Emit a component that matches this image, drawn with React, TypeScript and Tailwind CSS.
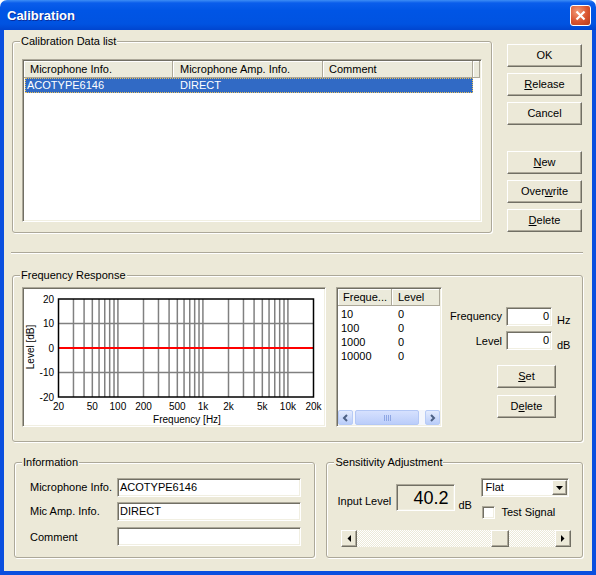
import React from 'react';

// classic 3D edges used all over the dialog
const sunken =
  'border border-t-[#ACA899] border-l-[#ACA899] border-r-white border-b-white p-px shadow-[inset_1px_1px_0_#716F64,inset_-1px_-1px_0_#F1EFE2]';
const raised =
  'border border-t-white border-l-white border-r-[#716F64] border-b-[#716F64] bg-[#ECE9D8] shadow-[inset_-1px_-1px_0_#ACA899]';
const headCell =
  'flex h-full items-center border-r border-b border-[#ACA899] bg-[#EBEADB] shadow-[inset_1px_1px_0_#fff]';

function Btn({ children, className = '' }: { children: React.ReactNode; className?: string }) {
  return (
    <button
      type="button"
      className={`${raised} flex h-[23px] items-center justify-center text-[11px] leading-none text-black ${className}`}
    >
      {children}
    </button>
  );
}

function Group({
  label,
  className = '',
  children,
}: {
  label: string;
  className?: string;
  children?: React.ReactNode;
}) {
  return (
    <div
      className={`relative rounded-[3px] border border-[#ACA899] shadow-[inset_1px_1px_0_#fff,1px_1px_0_#fff] ${className}`}
    >
      <span className="absolute left-[7px] top-[-7px] bg-[#ECE9D8] px-px text-[11px] leading-[13px]">
        {label}
      </span>
      {children}
    </div>
  );
}

function ListView() {
  return (
    <div className={`${sunken} h-[163px] w-[460px] bg-white`}>
      <div className="flex h-[17px] text-[11px]">
        <div className={`${headCell} w-[149px] pl-[6px]`}>Microphone Info.</div>
        <div className={`${headCell} w-[150px] pl-[7px]`}>Microphone Amp. Info.</div>
        <div className={`${headCell} w-[150px] pl-[6px]`}>Comment</div>
        <div className={`${headCell} flex-1`} />
      </div>
      <div className="ml-px flex h-[15px] w-[448px] items-center border border-dotted border-[#E9C25A] bg-[#316AC5] text-[11px] text-white">
        <span className="w-[147px] pl-px">ACOTYPE6146</span>
        <span className="pl-[7px]">DIRECT</span>
      </div>
    </div>
  );
}

function Graph() {
  const L = 34.5;
  const R = 289.5;
  const T = 10;
  const B = 108;
  const fx = (f: number) => L + ((R - L) / 3) * Math.log10(f / 20);
  const fy = (db: number) => T + ((20 - db) * (B - T)) / 40;

  const freqs: number[] = [];
  for (const dec of [10, 100, 1000, 10000]) {
    for (let m = 1; m <= 9; m++) {
      const f = m * dec;
      if (f > 20 && f < 20000) freqs.push(f);
    }
  }
  const xLabels: [number, string][] = [
    [20, '20'],
    [50, '50'],
    [100, '100'],
    [200, '200'],
    [500, '500'],
    [1000, '1k'],
    [2000, '2k'],
    [5000, '5k'],
    [10000, '10k'],
    [20000, '20k'],
  ];

  return (
    <div className={`${sunken} h-[140px] w-[304px] bg-white`}>
      <svg width="300" height="136" viewBox="0 0 300 136" className="block">
        {freqs.map((f) => (
          <line key={f} x1={fx(f)} x2={fx(f)} y1={T} y2={B} stroke="#808080" strokeWidth="1.5" />
        ))}
        {[10, -10].map((d) => (
          <line key={d} x1={L} x2={R} y1={fy(d)} y2={fy(d)} stroke="#808080" strokeWidth="1.5" />
        ))}
        <line x1={L} x2={R} y1={fy(0)} y2={fy(0)} stroke="#FF0000" strokeWidth="2" />
        <rect x={L} y={T} width={R - L} height={B - T} fill="none" stroke="#000" strokeWidth="1.5" />
        <g fontFamily="'Liberation Sans', Arial, sans-serif" fontSize="10" fill="#000">
          {[20, 10, 0, -10, -20].map((d) => (
            <text key={d} x={30} y={fy(d) + 3.5} textAnchor="end">
              {d}
            </text>
          ))}
          {xLabels.map(([f, s]) => (
            <text key={s} x={fx(f)} y={120.5} textAnchor="middle">
              {s}
            </text>
          ))}
          <text x={163} y={134} textAnchor="middle">
            Frequency [Hz]
          </text>
          <text x={10} y={58} textAnchor="middle" transform="rotate(-90 10 58)">
            Level [dB]
          </text>
        </g>
      </svg>
    </div>
  );
}

function XpArrow({ dir }: { dir: 'l' | 'r' }) {
  return (
    <div className="flex h-full w-[15px] items-center justify-center rounded-[2px] border border-[#B7CBF6] bg-[linear-gradient(to_bottom,#E3EBFE,#BACDF9)]">
      <svg width="7" height="8" viewBox="0 0 7 8">
        <path
          d={dir === 'l' ? 'M5 1L2 4L5 7' : 'M2 1L5 4L2 7'}
          stroke="#4D6185"
          strokeWidth="2"
          fill="none"
        />
      </svg>
    </div>
  );
}

function FreqList() {
  const rows = [
    ['10', '0'],
    ['100', '0'],
    ['1000', '0'],
    ['10000', '0'],
  ];
  return (
    <div className={`${sunken} flex h-[140px] w-[106px] flex-col bg-white text-[11px]`}>
      <div className="flex h-[17px]">
        <div className={`${headCell} w-[54px] pl-[5px]`}>Freque...</div>
        <div className={`${headCell} flex-1 pl-[6px]`}>Level</div>
      </div>
      <div className="flex-1 pt-px">
        {rows.map(([f, l]) => (
          <div key={f} className="flex leading-[14px]">
            <span className="w-[54px] pl-[3px]">{f}</span>
            <span className="pl-[6px]">{l}</span>
          </div>
        ))}
      </div>
      <div className="flex h-[15px] bg-[#F4F6FC]">
        <XpArrow dir="l" />
        <div className="ml-[2px] flex w-[64px] items-center justify-center gap-px rounded-[2px] border border-[#B3C7F5] bg-[linear-gradient(to_bottom,#D6E1FE,#BBCDFA)]">
          <span className="h-[6px] w-px bg-[#8EA6E4]" />
          <span className="h-[6px] w-px bg-[#8EA6E4]" />
          <span className="h-[6px] w-px bg-[#8EA6E4]" />
          <span className="h-[6px] w-px bg-[#8EA6E4]" />
        </div>
        <div className="flex-1" />
        <XpArrow dir="r" />
      </div>
    </div>
  );
}

function Field({ value, className = '' }: { value: string; className?: string }) {
  return (
    <div className={`${sunken} flex h-[19px] items-center bg-white text-[11px] ${className}`}>{value}</div>
  );
}

function ClassicArrow({ dir }: { dir: 'l' | 'r' }) {
  return (
    <div className={`${raised} flex h-full w-[16px] items-center justify-center`}>
      <svg width="4" height="7" viewBox="0 0 4 7">
        <path d={dir === 'l' ? 'M4 0L0.5 3.5L4 7Z' : 'M0 0L3.5 3.5L0 7Z'} fill="#000" />
      </svg>
    </div>
  );
}

export default function App() {
  return (
    <div className="h-[575px] w-[596px] bg-white font-['Liberation_Sans',Arial,sans-serif] text-black">
      <div className="flex h-full flex-col">
        {/* title bar */}
        <div className="flex h-[30px] items-center justify-between rounded-t-[7px] bg-[linear-gradient(to_bottom,#3D8DF5_0%,#0A5DEB_10%,#0055E5_35%,#0053E1_80%,#0045CF_100%)] pl-[7px] pr-[5px]">
          <span className="pt-px text-[13px] font-bold text-white [text-shadow:1px_1px_0_#0B2E9E]">
            Calibration
          </span>
          <div className="flex h-[21px] w-[21px] items-center justify-center rounded-[3px] border border-white bg-[radial-gradient(circle_at_35%_30%,#F39B78,#D9542F_55%,#B63C1C)]">
            <svg width="11" height="11" viewBox="0 0 11 11">
              <path d="M1.5 1.5L9.5 9.5M9.5 1.5L1.5 9.5" stroke="#fff" strokeWidth="2.2" />
            </svg>
          </div>
        </div>

        {/* client area */}
        <div className="flex-1 border-x-4 border-b-4 border-[#0A4FDF] bg-[#ECE9D8] pl-[8px] pr-[9px] pt-[11px] text-[11px]">
          <div className="flex">
            <Group label="Calibration Data list" className="h-[192px] w-[480px] pl-[9px] pt-[17px]">
              <ListView />
            </Group>
            <div className="ml-[15px] flex w-[75px] flex-col pt-[3px]">
              <Btn>OK</Btn>
              <Btn className="mt-[6px]">
                <u>R</u>elease
              </Btn>
              <Btn className="mt-[6px]">Cancel</Btn>
              <Btn className="mt-[26px]">
                <u>N</u>ew
              </Btn>
              <Btn className="mt-[6px]">
                Over<u>w</u>rite
              </Btn>
              <Btn className="mt-[6px]">
                <u>D</u>elete
              </Btn>
            </div>
          </div>

          <div className="-ml-px mt-[19px] h-[2px] w-[572px] border-t border-b border-t-[#ACA899] border-b-white" />

          <Group label="Frequency Response" className="mt-[21px] flex h-[167px] w-[571px] pl-[9px] pt-[11px]">
            <Graph />
            <div className="ml-[10px]">
              <FreqList />
            </div>
            <div className="ml-[8px] flex flex-col">
              <div className="mt-[20px] flex h-[19px] items-start">
                <span className="mt-[3px] w-[52px] text-right leading-[13px]">Frequency</span>
                <Field value="0" className="ml-[4px] w-[46px] justify-end pr-[2px]" />
                <span className="ml-[5px] mt-[7px] leading-[13px]">Hz</span>
              </div>
              <div className="mt-[5px] flex h-[19px] items-start">
                <span className="mt-[4px] w-[52px] text-right leading-[13px]">Level</span>
                <Field value="0" className="ml-[4px] w-[46px] justify-end pr-[2px]" />
                <span className="ml-[5px] mt-[8px] leading-[13px]">dB</span>
              </div>
              <Btn className="ml-[47px] mt-[15px] w-[59px]">
                <u>S</u>et
              </Btn>
              <Btn className="ml-[47px] mt-[7px] w-[59px]">
                D<u>e</u>lete
              </Btn>
            </div>
          </Group>

          <div className="mt-[20px] flex">
            <Group label="Information" className="ml-[2px] h-[96px] w-[302px] pl-[15px] pt-[15px]">
              <div className="grid grid-cols-[87px_184px] items-center gap-y-[5px]">
                <span>Microphone Info.</span>
                <Field value="ACOTYPE6146" className="pl-[2px]" />
                <span>Mic Amp. Info.</span>
                <Field value="DIRECT" className="pl-[2px]" />
                <span className="pt-[3px]">Comment</span>
                <Field value="" className="mt-px" />
              </div>
            </Group>

            <Group label="Sensitivity Adjustment" className="ml-[11px] h-[96px] w-[257px] pl-[10px] pt-[15px]">
              <div className="flex h-[41px] items-start">
                <span className="mt-[17px] w-[59px] leading-[13px]">Input Level</span>
                <div className={`${sunken} mt-[6px] flex h-[27px] w-[59px] items-center justify-end pr-[6px] text-[18px] leading-none`}>
                  40.2
                </div>
                <span className="ml-[3px] mt-[21px] w-[23px] leading-[13px]">dB</span>
                <div className="flex flex-col">
                  <div className={`${sunken} flex h-[19px] w-[88px] bg-white`}>
                    <span className="flex-1 pl-[2px] leading-[15px]">Flat</span>
                    <div className={`${raised} flex w-[15px] items-center justify-center`}>
                      <svg width="7" height="4" viewBox="0 0 7 4">
                        <path d="M0 0H7L3.5 4Z" fill="#000" />
                      </svg>
                    </div>
                  </div>
                  <div className="mt-[9px] flex items-center">
                    <div className={`${sunken} ml-px h-[13px] w-[13px] bg-white`} />
                    <span className="ml-[6px] leading-[13px]">Test Signal</span>
                  </div>
                </div>
              </div>
              <div className="ml-[4px] mt-[11px] flex h-[17px] w-[230px]">
                <ClassicArrow dir="l" />
                <div className="flex-1 bg-[image:repeating-conic-gradient(#fff_0_25%,#ECE9D8_0_50%)] bg-[length:2px_2px]">
                  <div className={`${raised} ml-[134px] h-full w-[18px]`} />
                </div>
                <ClassicArrow dir="r" />
              </div>
            </Group>
          </div>
        </div>
      </div>
    </div>
  );
}
